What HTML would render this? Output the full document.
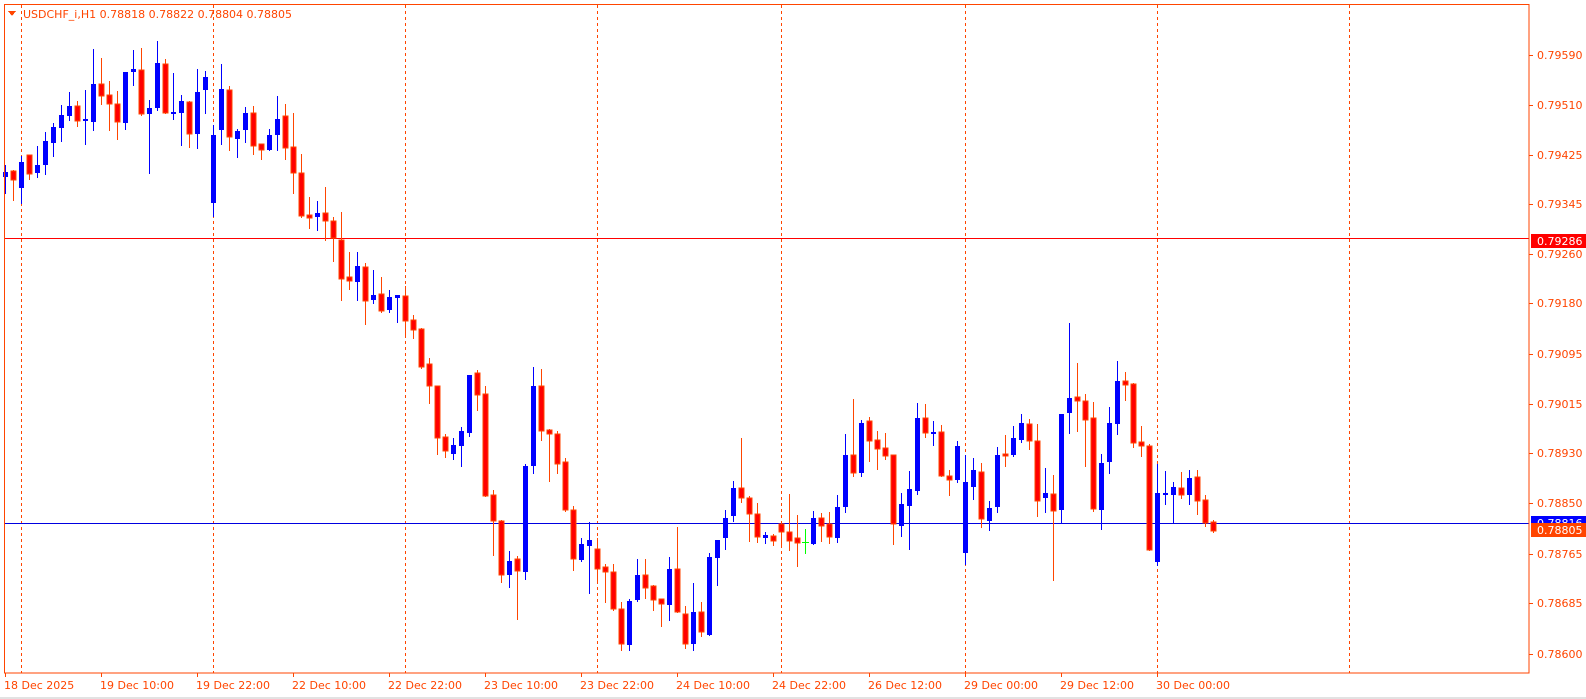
<!DOCTYPE html>
<html><head><meta charset="utf-8">
<style>
html,body{margin:0;padding:0;background:#fff;width:1586px;height:699px;overflow:hidden}
svg{display:block}
text{font-family:"DejaVu Sans","Liberation Sans",sans-serif;font-size:11px;fill:#ff4500}
</style></head>
<body>
<svg id="s" width="1586" height="699" viewBox="0 0 1586 699" shape-rendering="crispEdges">
<rect x="0" y="0" width="1586" height="699" fill="#fff"/>
<rect x="0" y="697" width="1586" height="2" fill="#e2e2e2"/>
<g id="grid" stroke="#ff4500" stroke-width="1" stroke-dasharray="3,3">
<line x1="21.5" y1="5" x2="21.5" y2="673"/>
<line x1="213.5" y1="5" x2="213.5" y2="673"/>
<line x1="405.5" y1="5" x2="405.5" y2="673"/>
<line x1="597.5" y1="5" x2="597.5" y2="673"/>
<line x1="781.5" y1="5" x2="781.5" y2="673"/>
<line x1="965.5" y1="5" x2="965.5" y2="673"/>
<line x1="1157.5" y1="5" x2="1157.5" y2="673"/>
<line x1="1349.5" y1="5" x2="1349.5" y2="673"/>
</g>
<line x1="5" y1="238.5" x2="1529" y2="238.5" stroke="#ff0000"/>
<line x1="5" y1="523.5" x2="1529" y2="523.5" stroke="#0000e0"/>
<g id="candles"></g>
<rect x="4.5" y="4.5" width="1524.5" height="668.5" fill="none" stroke="#ff4500"/>
<polygon points="8,11 16,11 12,16" fill="#ff4500"/>
<text x="23" y="18">USDCHF_i,H1  0.78818 0.78822 0.78804 0.78805</text>
<g id="ax"></g>
<rect x="1531" y="516" width="55" height="8" fill="#0000ff"/>
<text x="1537" y="527" style="fill:#fff">0.78816</text>
<rect x="1531" y="523" width="55" height="14" fill="#ff4500"/>
<text x="1537" y="534" style="fill:#fff">0.78805</text>
<rect x="1531" y="234" width="55" height="14" fill="#ff0000"/>
<text x="1537" y="245" style="fill:#fff">0.79286</text>
</svg>
<script>
var d=[
['b',172,177,165,193],['r',171,180,170,200],['b',162,188,156,203],['r',155,174,155,179],['b',165,173,146,177],
['b',141,165,132,174],['b',127,143,123,156],['b',115,128,105,141],['b',106,116,92,120],['r',106,121,101,126],
['b',119,121,90,144],['b',84,122,49,130],['r',84,96,58,104],['r',95,104,81,130],['r',104,122,91,139],
['b',72,123,72,129],['b',69,72,50,85],['r',70,114,48,115],['b',108,114,100,173],['b',63,108,41,110],
['r',64,113,59,113],['b',112,114,73,119],['b',101,113,95,145],['r',102,134,101,147],['b',92,134,69,148],
['b',77,90,71,113],['b',135,203,125,216],['b',89,130,64,144],['r',90,137,86,150],['b',131,139,129,157],
['b',113,130,107,142],['r',113,146,106,154],['r',144,150,144,159],['b',135,150,129,150],['b',119,135,96,150],
['r',116,148,104,159],['r',147,173,113,193],['r',173,216,154,217],['r',215,218,197,228],['b',213,217,201,230],
['r',213,221,187,240],['r',221,238,217,261],['r',240,279,212,300],['r',277,281,252,289],['b',266,282,252,300],
['r',267,301,263,324],['b',295,300,270,303],['r',294,311,277,312],['b',297,310,290,312],['b',295,298,295,322],
['r',296,321,286,337],['r',320,330,315,338],['r',329,367,328,368],['r',364,386,358,403],['r',386,438,386,454],
['r',437,451,434,457],['b',445,454,438,459],['b',431,446,427,466],['b',375,433,375,436],['r',373,395,370,410],
['r',394,496,386,496],['r',495,521,490,555],['r',521,575,520,582],['b',561,575,551,587],['r',559,571,556,619],
['b',466,572,464,579],['b',386,466,367,473],['r',386,431,369,440],['r',430,434,429,481],['r',434,464,431,473],
['r',462,510,458,511],['r',510,559,506,570],['b',544,560,538,561],['b',540,546,522,593],['r',549,569,538,583],
['r',567,572,564,602],['r',572,609,564,610],['r',609,644,602,650],['b',601,645,599,650],['b',575,600,559,601],
['r',575,588,559,598],['r',586,600,585,610],['r',599,604,599,626],['b',569,605,557,620],['r',569,612,527,612],
['r',614,644,606,648],['b',612,644,583,650],['r',612,632,602,636],['b',557,635,553,635],['b',540,558,540,585],
['b',518,538,510,549],['b',488,516,481,521],['r',488,498,438,502],['r',498,514,496,541],['r',514,537,503,542],
['b',535,538,532,543],['r',536,541,534,545],['r',524,532,522,547],['r',532,541,494,550],['r',538,543,515,566],
['g',542,542,529,553],['b',518,544,511,544],['r',518,526,513,541],['r',524,537,512,543],['b',507,538,495,542],
['b',455,507,434,512],['r',455,473,399,476],['b',423,473,420,476],['r',421,441,417,461],['r',440,449,431,469],
['r',448,456,433,459],['r',455,524,455,544],['b',504,526,493,536],['b',489,506,471,549],['b',418,491,403,494],
['r',418,433,404,437],['b',432,434,421,445],['r',432,476,425,476],['r',476,480,470,495],['b',446,480,441,482],
['b',482,553,455,564],['b',470,487,458,499],['r',472,519,463,527],['b',508,521,501,530],['b',455,507,447,512],
['r',454,456,435,466],['b',438,455,426,456],['b',423,440,414,442],['r',424,441,419,449],['r',441,501,424,516],
['b',493,498,468,512],['r',494,511,475,580],['b',414,510,414,523],['b',398,413,323,433],['r',397,401,363,431],
['r',401,420,394,466],['r',418,509,402,511],['b',463,510,454,529],['b',423,462,407,473],['b',381,424,361,434],
['r',381,385,372,400],['r',384,443,383,447],['r',442,446,426,456],['r',446,550,444,550],['b',493,562,464,565],
['b',493,495,471,504],['b',487,495,482,522],['r',488,495,472,498],['b',478,495,470,504],['r',477,501,470,514],
['r',500,523,495,526],['r',522,531,520,532]
];
var h='';
for(var i=0;i<d.length;i++){
 var c=5+8*i,e=d[i],t=e[0];
 var wc=t=='b'?'#0000ff':(t=='g'?'#00ff00':'#ff4500');
 h+='<rect x="'+c+'" y="'+e[3]+'" width="1" height="'+(e[4]-e[3]+1)+'" fill="'+wc+'"/>';
 if(t=='g'){h+='<rect x="'+(c-3)+'" y="'+e[1]+'" width="7" height="1" fill="#00ff00"/>';}
 else if(t=='b'){h+='<rect x="'+(c-2)+'" y="'+e[1]+'" width="5" height="'+Math.max(2,e[2]-e[1])+'" fill="#0000ff"/>';}
 else{h+='<rect x="'+(c-2)+'" y="'+e[1]+'" width="5" height="'+Math.max(2,e[2]-e[1])+'" fill="#ff0000" stroke="#ff4500" stroke-width="1"/>';}
}
document.getElementById('candles').innerHTML=h;
var a='';
var pl=[['0.79590',55],['0.79510',105],['0.79425',155],['0.79345',204],['0.79260',254],['0.79180',303],['0.79095',354],['0.79015',404],['0.78930',453],['0.78850',503],['0.78765',554],['0.78685',603],['0.78600',654]];
for(var j=0;j<pl.length;j++){a+='<rect x="1529" y="'+pl[j][1]+'" width="4" height="1" fill="#ff4500"/><text x="1537" y="'+(pl[j][1]+4)+'">'+pl[j][0]+'</text>';}
var tl=[['18 Dec 2025',5],['19 Dec 10:00',101],['19 Dec 22:00',197],['22 Dec 10:00',293],['22 Dec 22:00',389],['23 Dec 10:00',485],['23 Dec 22:00',581],['24 Dec 10:00',677],['24 Dec 22:00',773],['26 Dec 12:00',869],['29 Dec 00:00',965],['29 Dec 12:00',1061],['30 Dec 00:00',1157]];
for(var k=0;k<tl.length;k++){a+='<rect x="'+tl[k][1]+'" y="673" width="1" height="4" fill="#ff4500"/><text x="'+(tl[k][1]-1)+'" y="689">'+tl[k][0]+'</text>';}
document.getElementById('ax').innerHTML=a;
</script>
</body></html>
